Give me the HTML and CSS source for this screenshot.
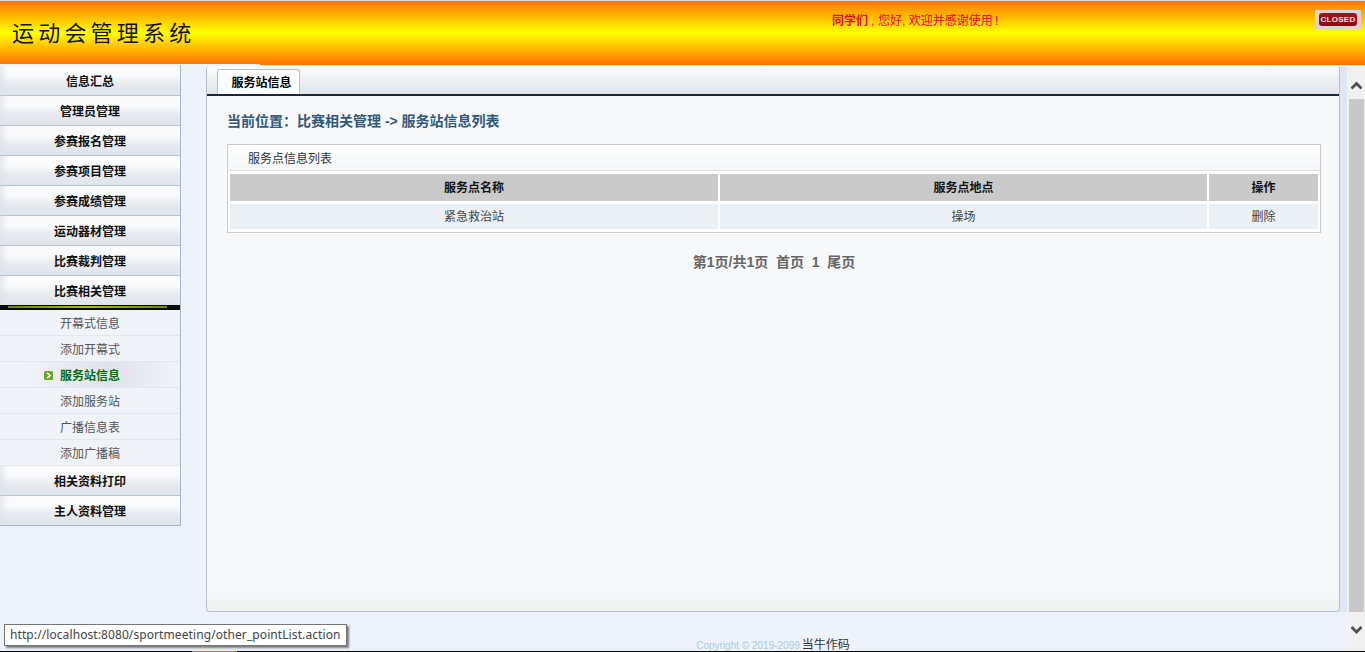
FILE: index.html
```html
<!DOCTYPE html>
<html lang="zh-CN">
<head>
<meta charset="utf-8">
<title>运动会管理系统</title>
<link rel="stylesheet" href="styles.css">
</head>
<body>
<header class="topbar">
  <div class="logo">运动会管理系统</div>
  <div class="greeting"><b>同学们</b> , 您好, 欢迎并感谢使用&#8201;!</div>
  <a class="closed"><span>CLOSED</span></a>
</header>
<div class="workspace">
  <nav class="sidebar">
    <a class="group">信息汇总</a>
    <a class="group">管理员管理</a>
    <a class="group">参赛报名管理</a>
    <a class="group">参赛项目管理</a>
    <a class="group">参赛成绩管理</a>
    <a class="group">运动器材管理</a>
    <a class="group">比赛裁判管理</a>
    <a class="group">比赛相关管理</a>
    <div class="divider"></div>
    <ul class="submenu">
      <li>开幕式信息</li>
      <li>添加开幕式</li>
      <li class="current"><svg class="arrow" viewBox="0 0 9 9" width="9" height="9"><rect width="9" height="9" rx="1.5" fill="#6aa526"/><path d="M3 1.8 6.2 4.5 3 7.2" fill="none" stroke="#fff" stroke-width="1.6"/></svg>服务站信息</li>
      <li>添加服务站</li>
      <li>广播信息表</li>
      <li>添加广播稿</li>
    </ul>
    <a class="group">相关资料打印</a>
    <a class="group">主人资料管理</a>
  </nav>
  <main class="mainarea">
    <section class="panel">
      <div class="tabbar"><span class="tab">服务站信息</span></div>
      <div class="panelbody">
        <h2 class="crumb">当前位置：比赛相关管理 -&gt; 服务站信息列表</h2>
        <div class="listbox">
          <div class="listtitle">服务点信息列表</div>
          <table class="listtable">
            <colgroup><col class="c1"><col class="c2"><col class="c3"></colgroup>
            <thead><tr><th>服务点名称</th><th>服务点地点</th><th>操作</th></tr></thead>
            <tbody><tr><td>紧急救治站</td><td>操场</td><td>删除</td></tr></tbody>
          </table>
        </div>
        <p class="pager">第1页/共1页&nbsp;&nbsp;首页&nbsp;&nbsp;1&nbsp;&nbsp;尾页</p>
      </div>
    </section>
    <footer class="copyright"><span class="cp">Copyright © 2019-2099</span><span class="author">当牛作码</span></footer>
  </main>
  <div class="scrollbar">
    <svg class="sarrow up" viewBox="0 0 17 17" width="17" height="17"><path d="M3.5 10.5 8.5 5.5 13.5 10.5" fill="none" stroke="#505050" stroke-width="2.8"/></svg>
    <div class="thumb"></div>
    <svg class="sarrow down" viewBox="0 0 17 17" width="17" height="17"><path d="M3.5 6 8.5 11 13.5 6" fill="none" stroke="#505050" stroke-width="2.8"/></svg>
  </div>
</div>
<div class="bottomline"><span class="seg"></span></div>
<div class="tooltip">http://localhost:8080/sportmeeting/other_pointList.action</div>
</body>
</html>
```
FILE: styles.css
```css
* { box-sizing: border-box; }
html, body { margin: 0; height: 652px; overflow: hidden; }
body {
  position: relative;
  display: flex;
  flex-direction: column;
  background: #edf2fb;
  font: 12px "Liberation Sans", "Noto Sans CJK SC", sans-serif;
  color: #333;
}
.topbar {
  flex: 0 0 65px;
  display: flex;
  border-top: 1px solid #e6dccf;
  background: linear-gradient(#ff7800 0, #ffff00 50%, #ff7000 100%);
}
.logo {
  width: 260px;
  height: 64px;
  padding: 16px 0 0 12px;
  border-bottom: 1px solid #f2f5fb;
  font: 22px/28px "Noto Sans CJK SC", sans-serif;
  letter-spacing: 4.2px;
  color: #151000;
  white-space: nowrap;
}
.greeting {
  margin: 12px 0 0 572px;
  width: 483px;
  line-height: 17px;
  color: #ee0040;
}
.greeting b { color: #d81020; }
.closed {
  align-self: flex-start;
  margin-top: 9px;
  width: 46px;
  height: 19px;
  padding: 3px 4px;
  background: #d8d5d2;
  border-radius: 1px;
}
.closed span {
  display: block;
  height: 13px;
  background: linear-gradient(#a80f1a, #8c0a12);
  border-radius: 3px;
  color: #f4e6e6;
  font: bold 8px/13px "Liberation Sans", sans-serif;
  letter-spacing: 0.3px;
  text-align: center;
}
.workspace { flex: 1; display: flex; min-height: 0; }
.sidebar {
  flex: 0 0 181px;
  align-self: flex-start;
  border-right: 1px solid #a5b7c9;
  border-bottom: 1px solid #a5b7c9;
  padding-top: 1px;
}
.group {
  display: block;
  height: 30px;
  padding-top: 8px;
  text-align: center;
  font-weight: bold;
  line-height: 17px;
  color: #111;
  background: linear-gradient(#fcfcfd 0, #f9fafb 35%, #e8ebf0 60%, #e1e5ec 92%);
  border-bottom: 1px solid #b8c3d1;
  box-shadow: inset 7px 0 6px -4px #dfe3ea, inset 0 -1px 0 #dfe4ec;
}
.group:last-child { height: 29px; border-bottom: 0; }
.divider {
  height: 5px;
  margin-top: -1px;
  background:
    linear-gradient(90deg, #6a8408, #a8c40e 50%, #6a8408) 8px 1px / 159px 2px no-repeat,
    #0a0a0a;
}
.submenu { list-style: none; margin: 0; padding: 0; background: #f0f3f8; }
.submenu li {
  position: relative;
  height: 26px;
  padding-top: 6px;
  line-height: 17px;
  text-align: center;
  color: #555;
  border-bottom: 1px solid #e2e6ed;
}
.submenu .current {
  color: #0a6a0a;
  font-weight: bold;
  background: linear-gradient(90deg, #f0f3f8 15%, #dfe3ea 60%, #f0f3f8);
}
.arrow { position: absolute; left: 44px; top: 9px; }
.mainarea {
  flex: 0 0 1134px;
  margin-left: 25px;
  display: flex;
  flex-direction: column;
  padding-top: 1px;
}
.panel {
  flex: 0 0 546px;
  display: flex;
  flex-direction: column;
  border: 1px solid #b3c0cf;
  border-top: 0;
  border-radius: 4px;
  box-shadow: 7px 0 0 #e0e6f2;
  background: linear-gradient(#f7f8fa 96%, #f0f2f1 100%);
}
.tabbar {
  flex: 0 0 28px;
  padding: 3px 0 0 10px;
  background: linear-gradient(#fcfdfd, #dfe5ea);
  border-bottom: 2px solid #17293a;
  border-radius: 4px 4px 0 0;
}
.tab {
  display: block;
  width: 83px;
  height: 25px;
  padding-left: 6px;
  background: #fdfefe;
  border: 1px solid #b3c0cf;
  border-bottom: 0;
  border-radius: 3px 3px 0 0;
  text-align: center;
  font-weight: bold;
  line-height: 26px;
  color: #000;
}
.panelbody { padding: 0 18px 0 20px; }
.crumb {
  margin: 16px 0 13px;
  font-size: 14px;
  line-height: 19px;
  font-weight: bold;
  color: #31587b;
}
.listbox {
  height: 89px;
  background: #fff;
  border: 1px solid #ccc;
}
.listtitle {
  height: 26px;
  padding-left: 20px;
  line-height: 28px;
  color: #333;
  background: linear-gradient(#fff, #f3f5f8);
  border-bottom: 1px solid #e4e6ea;
}
.listtable {
  width: 1092px;
  table-layout: fixed;
  border-collapse: separate;
  border-spacing: 2px 3px;
}
.c1 { width: 488px; }
.c2 { width: 487px; }
.c3 { width: 109px; }
.listtable th {
  height: 27px;
  padding: 0 0 2px;
  background: #cacaca;
  color: #111;
  font-weight: bold;
}
.listtable td {
  height: 25px;
  padding: 0 0 2px;
  background: #ebf0f5;
  text-align: center;
  color: #444;
}
.pager {
  margin: 19px 0 0;
  line-height: 20px;
  font-size: 14px;
  font-weight: bold;
  text-align: center;
  color: #666;
}
.copyright {
  margin-top: 25px;
  text-align: center;
  line-height: 17px;
  color: #333;
}
.cp { font-size: 10px; color: #a8ccd8; }
.author { margin-left: 2px; }
.scrollbar {
  flex: 0 0 17px;
  margin-left: 8px;
  display: flex;
  flex-direction: column;
  background: #f1f1f1;
}
.sarrow { flex: 0 0 17px; }
.up { margin: 13px 0 4px; }
.down { margin: 9px 0 13px; }
.thumb { flex: 1; margin: 0 1px; background: #c8c8c8; }
.bottomline { flex: 0 0 1px; background: #000; padding-left: 192px; }
.seg { display: block; width: 45px; height: 1px; background: #b87a30; }
.tooltip {
  position: absolute;
  left: 4px;
  top: 624px;
  width: 343px;
  height: 22px;
  padding-left: 5px;
  border: 1px solid #767676;
  background: #fff;
  box-shadow: 2px 2px 2px #777;
  color: #444;
  font: 12px/20px "Noto Sans", "Liberation Sans", sans-serif;
  letter-spacing: 0.09px;
  white-space: nowrap;
}
```
